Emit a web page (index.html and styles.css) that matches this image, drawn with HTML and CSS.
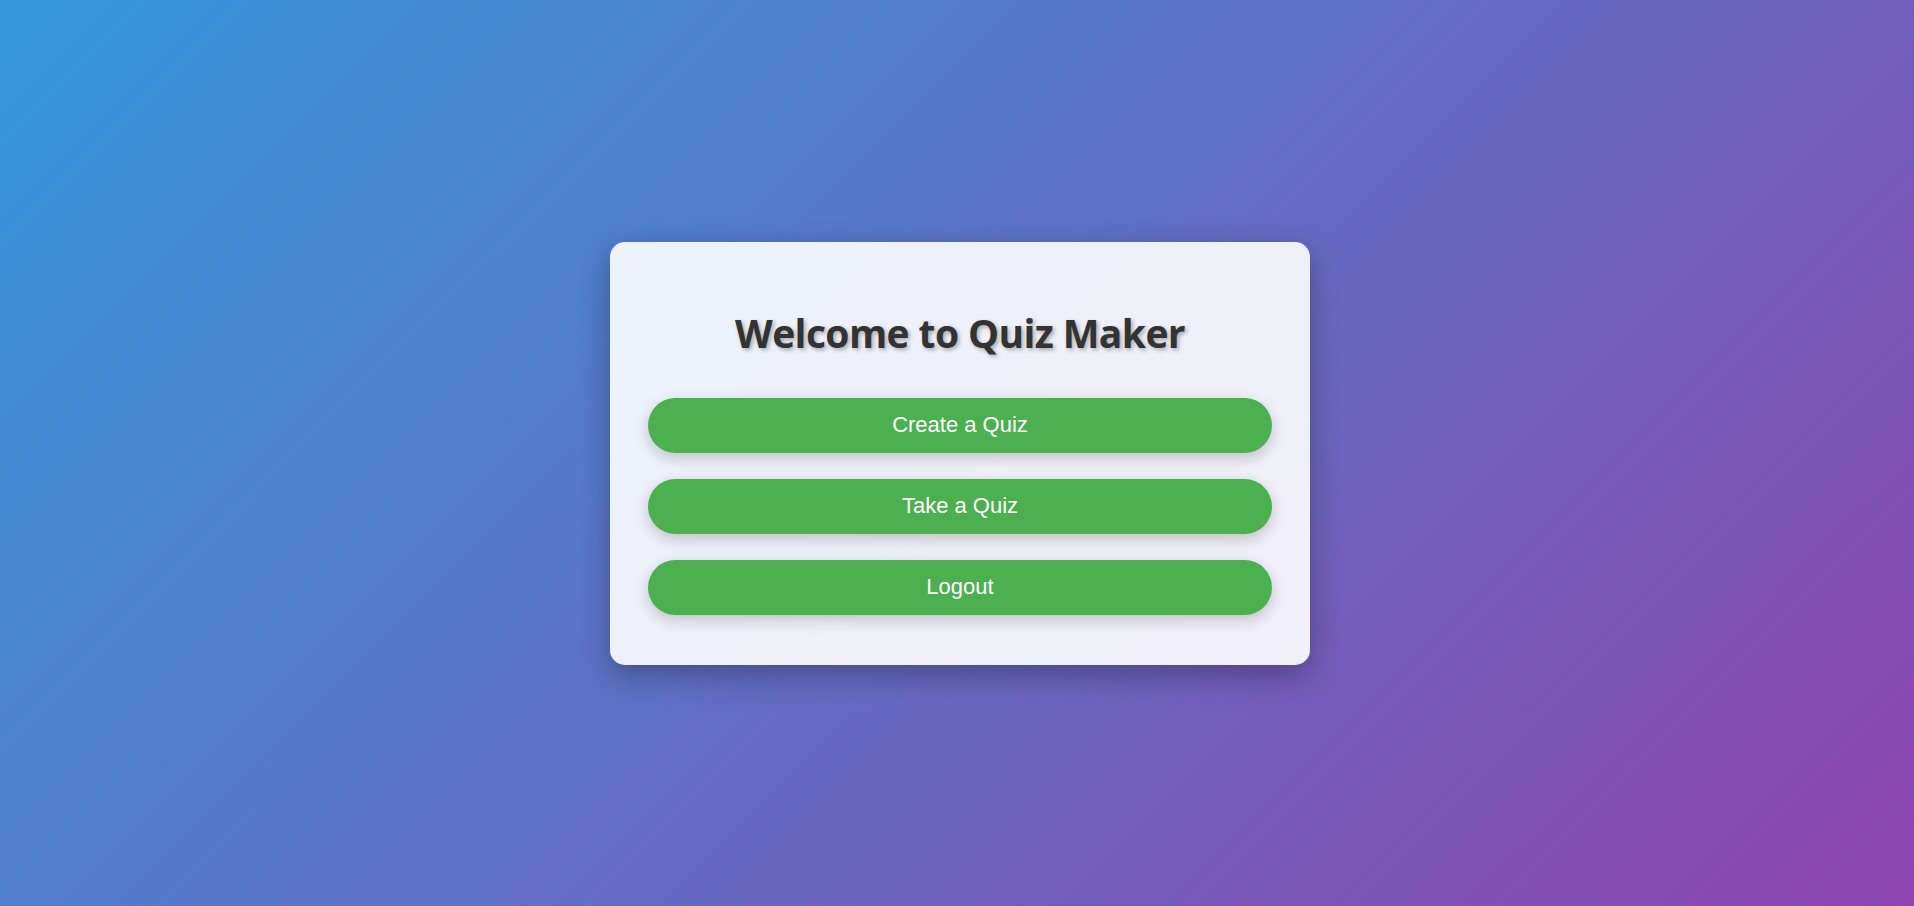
FILE: index.html
```html
<!DOCTYPE html>
<html lang="en">
<head>
<meta charset="utf-8">
<title>Quiz Maker</title>
<link rel="stylesheet" href="styles.css">
</head>
<body>
<main class="page">
  <section class="card">
    <h1 class="title">Welcome to Quiz Maker</h1>
    <div class="actions">
      <button class="btn">Create a Quiz</button>
      <button class="btn">Take a Quiz</button>
      <button class="btn">Logout</button>
    </div>
  </section>
</main>
</body>
</html>
```

FILE: styles.css
```css
* { box-sizing: border-box; }
html, body { margin: 0; padding: 0; height: 100%; }
body {
  background: linear-gradient(135deg, #3498db, #8e44ad);
  font-family: "Liberation Sans", Arial, sans-serif;
}
.page {
  height: 100vh;
  padding-left: 6px;
  display: flex;
  align-items: center;
  justify-content: center;
}
.card {
  width: 700px;
  padding: 44px 38px 50px;
  background: rgba(255, 255, 255, 0.9);
  border-radius: 15px;
  box-shadow: 0 10px 30px rgba(0, 0, 0, 0.3);
  text-align: center;
}
.title {
  margin: 4px 0 22px;
  font-family: "Open Sans", "Noto Sans", sans-serif;
  font-weight: 700;
  font-size: 39px;
  line-height: 86px;
  color: #333;
  letter-spacing: -0.6px;
  text-shadow: 2px 2px 4px rgba(0, 0, 0, 0.3);
}
.actions {
  display: flex;
  flex-direction: column;
  gap: 26px;
}
.btn {
  display: block;
  width: 100%;
  height: 55px;
  border: none;
  border-radius: 30px;
  background: #4caf50;
  color: #fff;
  font-family: "Liberation Sans", Arial, sans-serif;
  font-size: 22px;
  box-shadow: 0 5px 15px rgba(0, 0, 0, 0.2);
  cursor: pointer;
}
```
